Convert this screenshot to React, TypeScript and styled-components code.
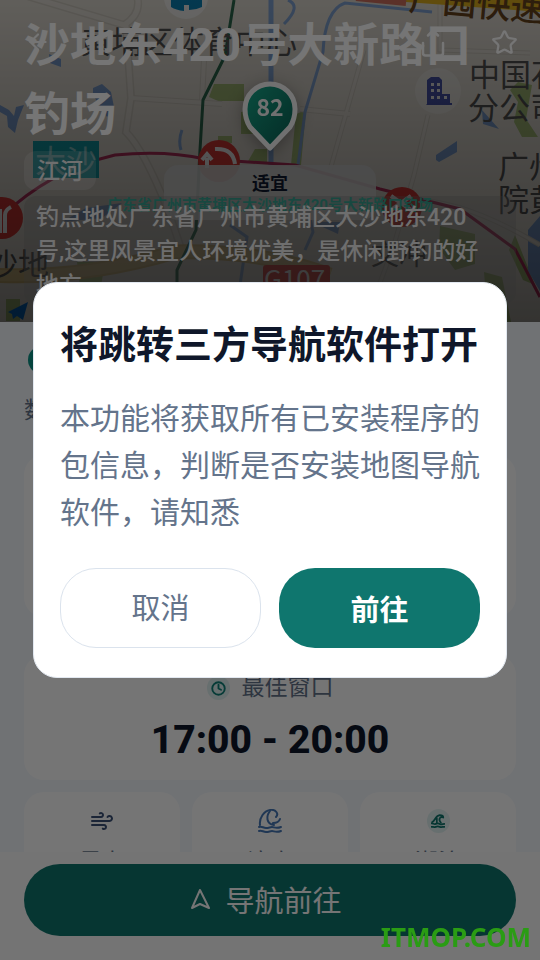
import React from "react";
import styled, { createGlobalStyle } from "styled-components";
import { ArrowLeft, Clock, Share, Star, Wind } from "lucide-react";

const GlobalStyle = createGlobalStyle`
  *, *::before, *::after { box-sizing: border-box; }
  body {
    margin: 0;
    font-family: Roboto, "Noto Sans CJK SC", sans-serif;
    color: #0f172a;
    background: #f5f8fd;
  }
  button { font: inherit; border: 0; background: none; cursor: pointer; padding: 0; }
  h1, h2, p { margin: 0; }
`;

const Page = styled.div`
  display: flex;
  flex-direction: column;
  height: 100vh;
  min-height: 640px;
  overflow: hidden;
`;

const Hero = styled.header`
  position: relative;
  flex: none;
  padding: 11px 24px 18px;
  overflow: hidden;
  color: #fff;
`;

const MapCanvas = styled.svg`
  position: absolute;
  inset: 0;
  width: 100%;
  height: 100%;
`;

const MapShade = styled.div`
  position: absolute;
  inset: 0;
  background: linear-gradient(rgba(0, 0, 0, 0.08), rgba(0, 0, 0, 0.25) 40%, rgba(0, 0, 0, 0.5));
`;

const Bubble = styled.div`
  position: absolute;
  top: 165px;
  left: 50%;
  transform: translateX(-50%);
  display: flex;
  flex-direction: column;
  align-items: center;
  width: 212px;
  height: 55px;
  padding-top: 6px;
  border-radius: 14px;
  background: rgba(164, 164, 164, 0.9);
`;

const BubbleTitle = styled.strong`
  font-size: 18px;
  line-height: 26px;
  font-weight: 700;
  color: #0f172a;
`;

const BubbleAddress = styled.span`
  font-size: 15px;
  line-height: 16px;
  font-weight: 700;
  white-space: nowrap;
  color: #1fb39b;
`;

const Pin = styled.svg`
  position: absolute;
  top: 75px;
  left: 50%;
  width: 64px;
  height: 80px;
  transform: translateX(-50%);
  filter: drop-shadow(0 4px 8px rgba(0, 0, 0, 0.3));
`;

const TopActions = styled.nav`
  position: absolute;
  top: 28px;
  left: 24px;
  right: 22px;
  display: flex;
  align-items: center;
  gap: 44px;
`;

const IconButton = styled.button<{ $push?: boolean }>`
  display: grid;
  place-items: center;
  width: 28px;
  height: 28px;
  margin-right: ${(p) => (p.$push ? "auto" : "0")};
  color: #fff;
`;

const HeroContent = styled.div`
  position: relative;
  display: flex;
  flex-direction: column;
  align-items: flex-start;
  pointer-events: none;
`;

const PlaceTitle = styled.h1`
  font-size: 46px;
  line-height: 69px;
  font-weight: 700;
`;

const Tag = styled.span`
  margin-top: 2px;
  padding: 4px 13px 1px;
  border-radius: 12px;
  font-size: 23px;
  line-height: 34px;
  font-weight: 500;
  color: #f0f0f0;
  background: rgba(255, 255, 255, 0.16);
`;

const Description = styled.p`
  align-self: stretch;
  height: 108px;
  margin-top: 6px;
  padding: 5px 12px 0;
  border-radius: 12px;
  overflow: hidden;
  font-size: 23px;
  line-height: 34px;
  font-weight: 500;
  color: #f0f0f0;
  background: rgba(110, 110, 110, 0.3);
`;

const Content = styled.main`
  flex: 1;
  min-height: 0;
  overflow: hidden;
  padding: 24px 24px 0;
`;

const Source = styled.section`
  display: flex;
  flex-direction: column;
  gap: 20px;
  height: 109px;
  font-size: 23px;
  line-height: 34px;
  color: #64748b;
`;

const ScoreDot = styled.span`
  width: 28px;
  height: 28px;
  margin-left: 4px;
  border-radius: 50%;
  background: #0d9488;
`;

const Card = styled.section`
  display: flex;
  flex-direction: column;
  align-items: center;
  border-radius: 20px;
  background: #fff;
`;

const ScoreCard = styled(Card)`
  height: 162px;
`;

const WindowCard = styled(Card)`
  margin-top: 38px;
  padding: 16px 12px 16px;
`;

const WindowLabel = styled.h2`
  display: flex;
  align-items: center;
  gap: 12px;
  font-size: 23px;
  line-height: 34px;
  font-weight: 400;
  color: #64748b;
`;

const IconHalo = styled.span`
  display: grid;
  place-items: center;
  width: 23px;
  height: 24px;
  border-radius: 50%;
  color: #0f8078;
  background: #e0f2f1;
`;

const WindowTime = styled.p`
  margin-top: 11px;
  font-size: 39px;
  line-height: 48px;
  font-weight: 800;
`;

const Metrics = styled.div`
  display: grid;
  grid-template-columns: repeat(3, 1fr);
  gap: 12px;
  margin-top: 12px;
`;

const Metric = styled(Card)<{ $tint: string }>`
  height: 120px;
  padding-top: 17px;
  gap: 13px;
  font-size: 23px;
  line-height: 34px;
  color: #64748b;
  svg { color: ${(p) => p.$tint}; }
`;

const Footer = styled.footer`
  flex: none;
  padding: 12px 24px 24px;
  background: #fcfcfd;
`;

const NavigateButton = styled.button`
  display: flex;
  align-items: center;
  justify-content: center;
  gap: 14px;
  width: 100%;
  height: 72px;
  padding: 0 8px 2px 0;
  border-radius: 36px;
  font-size: 29px;
  color: #fff;
  background: #0f766e;
`;

const Scrim = styled.div`
  position: fixed;
  inset: 0;
  display: grid;
  place-items: center;
  padding: 33px;
  background: rgba(0, 0, 0, 0.54);
`;

const Dialog = styled.section`
  width: 100%;
  max-width: 640px;
  padding: 31px 26px 29px;
  border: 1px solid #e2e8f0;
  border-radius: 24px;
  background: #fff;
`;

const DialogTitle = styled.h2`
  font-size: 38px;
  line-height: 62px;
  font-weight: 700;
  white-space: nowrap;
`;

const DialogText = styled.p`
  margin-top: 19px;
  font-size: 30px;
  line-height: 47px;
  color: #64748b;
`;

const DialogActions = styled.div`
  display: grid;
  grid-template-columns: 1fr 1fr;
  gap: 18px;
  margin-top: 32px;
`;

const DialogButton = styled.button<{ $primary?: boolean }>`
  height: 80px;
  padding-bottom: ${(p) => (p.$primary ? "0" : "4px")};
  border: ${(p) => (p.$primary ? "0" : "1px solid #dbe3ed")};
  border-radius: 36px;
  font-size: 29px;
  font-weight: ${(p) => (p.$primary ? 700 : 400)};
  color: ${(p) => (p.$primary ? "#fff" : "#64748b")};
  background: ${(p) => (p.$primary ? "#0f766e" : "#fff")};
`;

const Watermark = styled.span`
  position: fixed;
  right: 9px;
  bottom: 6px;
  font-family: "Noto Sans", sans-serif;
  font-size: 26px;
  line-height: 34px;
  font-weight: 700;
  color: #2a9c14;
`;

function CityMap() {
  return (
    <MapCanvas viewBox="0 0 540 322" preserveAspectRatio="xMidYMid slice" aria-hidden="true">
      <rect width="540" height="322" fill="#e4dfd6" />
      <g fill="#a8c07a">
        <path d="M214 84h30v17h-26l-9-4z" />
        <path d="M241 112l16-2v24h-16zM218 136h14v7h-14zM255 149h12v14h-20z" />
        <path d="M296 114l10-4-5 55h-10z" />
        <path d="M518 82l14 3-6 34 12 18h-16l-8-15 4-20-8-12z" />
        <path d="M440 226l35 8 0 30-20 6-16-22zM484 272l18 5 9 45h-23zM77 262h28l-4 24H80zM6 299h14v22H6z" />
        <path d="M515 235l20 50-12-5-14-30z" />
      </g>
      <g fill="#7c9fd2">
        <path d="M49 54l12 5 0 8-11-4zM93 88l9-4 9 8 3 15-7 10-14-22zM0 105l9 5 5 6 2-9 8-2-6 15-3 13-7-6-1-11-7-4z" />
        <path d="M436 155l21-14 0 11-18 10-3-2zM482 110l17 19-16-5zM86 208l-24 14 40-4 20-15zM322 222h18l-2 12-22-10z" />
        <path d="M528 230l12-14v75l-12-20z" />
      </g>
      <g fill="none" stroke="#d3cec4" strokeWidth="8">
        <path d="M0 -12L124 25Q142 14 137-4M126 25L131 98 126 132Q144 150 168 210L185 260" />
        <path d="M131 98L222 104M204 60l-2 40M300 109l50 5" strokeWidth="6" />
        <path d="M364 50L330 170M440 0v50l90 3M428 115l-14 60-20 70-26 70M380 205q60-20 160 40" strokeWidth="5" />
      </g>
      <g fill="none" stroke="#e6e1d9" strokeWidth="5">
        <path d="M0 -12L124 25Q142 14 137-4M126 25L131 98 126 132Q144 150 168 210L185 260" />
        <path d="M131 98L222 104M204 60l-2 40M300 109l50 5" strokeWidth="4" />
        <path d="M364 50L330 170M440 0v50l90 3M428 115l-14 60-20 70-26 70M380 205q60-20 160 40" strokeWidth="3" />
      </g>
      <g fill="none" stroke="#86a9da" strokeWidth="3">
        <path d="M432 12L345 3Q325 10 323 52L305 112 298 165M288 0q14 6-4 24M182 130q-4 10-1 20M230 225l17 12-9 62M308 210l5 22-8 18" />
        <path d="M271 0v165" strokeWidth="5" />
      </g>
      <path d="M-10 275Q80 280 175 252 260 250 330 275" fill="none" stroke="#d3b878" strokeWidth="15" />
      <path d="M-10 275Q80 280 175 252 260 250 330 275" fill="none" stroke="#dec58c" strokeWidth="11" />
      <path d="M234 0L225 56 203 100 200 150 196 230 177 270v20" fill="none" stroke="#2d6c50" strokeWidth="3" />
      <path d="M0 218Q50 170 115 155q50-5 90 4l90 6 85 24 80 20 55 40 25 48" fill="none" stroke="#b93160" strokeWidth="3" />
      <path d="M400 0h140v12L406 2z" fill="#e5b520" />
      <path d="M356 -2l50 5" stroke="#d87563" strokeWidth="6" />
      <circle cx="186" cy="-3" r="22" fill="#f3f1ee" />
      <path d="M171-2h31v9q-6 3-13 3V5h-5v6q-8-1-13-4z" fill="#0b86bb" />
      <circle cx="438" cy="91" r="23" fill="#fff" opacity=".35" />
      <path d="M427 104V80l4-3h8l3 3v14h8v9h2v2h-26z" fill="#4a56ae" />
      <path d="M431 83h3v3h-3zM437 83h3v3h-3zM431 89h3v3h-3zM437 89h3v3h-3zM431 96h3v3h-3zM437 96h3v3h-3zM444 96h3v3h-3z" fill="#eee" />
      <g fill="#e23c38">
        <circle cx="219" cy="161" r="21" />
        <circle cx="2" cy="218" r="21" />
        <circle cx="402" cy="207" r="20" />
        <rect x="263" y="265" width="67" height="28" rx="3" />
      </g>
      <g fill="none" stroke="#fff" strokeWidth="4">
        <path d="M215 149q18-1 20 15M207 158v10M202 160l5-6 5 6M0 233v-24M5 233v-18q0-5 6-8M391 196l20 14M411 196l-20 14" />
      </g>
      <rect x="33" y="141" width="66" height="37" fill="#15a3ad" />
      <path d="M8 312l20-10-5 18-6-4-4 3-1-5z" fill="#0875dc" />
      <g fontFamily="Noto Sans CJK SC, sans-serif" fontSize="31" fill="#565656">
        <text x="80" y="53">黄埔区体育中心</text>
        <text x="469" y="86">中国石</text>
        <text x="468" y="119">分公司</text>
        <text x="498" y="178">广州</text>
        <text x="498" y="211">院黄</text>
        <text x="371" y="265" fontSize="28">文冲</text>
        <text x="-13" y="275">沙地</text>
        <text x="35" y="172" fill="#8cd2d6">大沙</text>
        <text x="264" y="289" fill="#fff" fontSize="26">G107</text>
        <text x="408" y="10" fill="#6c481f" fontWeight="500" fontSize="34" transform="rotate(5 408 10)">广园快速</text>
      </g>
    </MapCanvas>
  );
}

function ScorePin() {
  return (
    <Pin viewBox="0 0 64 80" role="img" aria-label="82">
      <defs>
        <linearGradient id="pinFill" x1="0" y1="0" x2="1" y2="1">
          <stop offset="0" stopColor="#16a98b" />
          <stop offset="1" stopColor="#0a5c50" />
        </linearGradient>
      </defs>
      <path d="M32 73L12 52Q7 44 7 34a25 25 0 0 1 50 0q0 10-5 18z" fill="url(#pinFill)" stroke="#f4f4f4" strokeWidth="5" strokeLinejoin="round" />
      <text x="32" y="41" textAnchor="middle" fontFamily="Noto Sans CJK SC, sans-serif" fontSize="23" fontWeight="700" fill="#f4f4f4">82</text>
    </Pin>
  );
}

function WaveIcon({ size, stroke }: { size: number; stroke: number }) {
  return (
    <svg width={size} height={size} viewBox="0 0 24 24" fill="none" stroke="currentColor" strokeWidth={stroke} strokeLinecap="round" strokeLinejoin="round" aria-hidden="true">
      <path d="M2 16C1 9 6 2 12 1c6-1 9 4 6 7" />
      <path d="M12 2c-4 5-4 13 4 14M22 10c-1 3-4 4-7 4" />
      <path d="M1 18c3-1 4 1 7 1s4-1 6-1 4 2 9 0M1 22c3-1 4 1 7 1s4-1 6-1 4 2 9 0" />
    </svg>
  );
}

function TideIcon() {
  return (
    <svg width="14" height="14" viewBox="0 0 24 24" fill="none" stroke="currentColor" strokeWidth="3" strokeLinecap="round" strokeLinejoin="round" aria-hidden="true">
      <path d="M2 14C7 12 7 3 15 2c4 0 6 2 6 4-6-2-9 3-4 9M10 7v8" />
      <path d="M1 16c3 0 4 2 7 1s4-2 7 0 5 0 8 0M1 22c3 0 4 1 7 0s4-1 7 0 5 0 8 0" />
    </svg>
  );
}

function ArrowIcon() {
  return (
    <svg width="21" height="22" viewBox="0 0 21 22" fill="none" stroke="currentColor" strokeWidth="2" strokeLinejoin="round" aria-hidden="true">
      <path d="M10 2L2 20l8-4 9 4z" />
    </svg>
  );
}

export default function App() {
  return (
    <>
      <GlobalStyle />
      <Page>
        <Hero>
          <CityMap />
          <MapShade />
          <Bubble>
            <BubbleTitle>适宜</BubbleTitle>
            <BubbleAddress>广东省广州市黄埔区大沙地东420号大新路口钓场</BubbleAddress>
          </Bubble>
          <ScorePin />
          <TopActions>
            <IconButton $push aria-label="返回"><ArrowLeft size={26} /></IconButton>
            <IconButton aria-label="分享"><Share size={30} strokeWidth={2} /></IconButton>
            <IconButton aria-label="收藏"><Star size={27} strokeWidth={2} /></IconButton>
          </TopActions>
          <HeroContent>
            <PlaceTitle>沙地东420号大新路口<br />钓场</PlaceTitle>
            <Tag>江河</Tag>
            <Description>
              钓点地处广东省广州市黄埔区大沙地东420<br />
              号,这里风景宜人环境优美，是休闲野钓的好<br />
              地方
            </Description>
          </HeroContent>
        </Hero>
        <Content>
          <Source>
            <ScoreDot />
            <span>数</span>
          </Source>
          <ScoreCard />
          <WindowCard>
            <WindowLabel>
              <IconHalo><Clock size={15} strokeWidth={3} /></IconHalo>
              最佳窗口
            </WindowLabel>
            <WindowTime>17:00 - 20:00</WindowTime>
          </WindowCard>
          <Metrics>
            <Metric $tint="#3c5278"><Wind size={24} />风力</Metric>
            <Metric $tint="#4779b8"><WaveIcon size={24} stroke={2} />浪高</Metric>
            <Metric $tint="#0f766e"><IconHalo><TideIcon /></IconHalo>潮汐</Metric>
          </Metrics>
        </Content>
        <Footer>
          <NavigateButton><ArrowIcon />导航前往</NavigateButton>
        </Footer>
      </Page>
      <Scrim>
        <Dialog role="dialog" aria-modal="true" aria-labelledby="dialog-title">
          <DialogTitle id="dialog-title">将跳转三方导航软件打开</DialogTitle>
          <DialogText>本功能将获取所有已安装程序的包信息，判断是否安装地图导航软件，请知悉</DialogText>
          <DialogActions>
            <DialogButton>取消</DialogButton>
            <DialogButton $primary>前往</DialogButton>
          </DialogActions>
        </Dialog>
      </Scrim>
      <Watermark>ITMOP.COM</Watermark>
    </>
  );
}
